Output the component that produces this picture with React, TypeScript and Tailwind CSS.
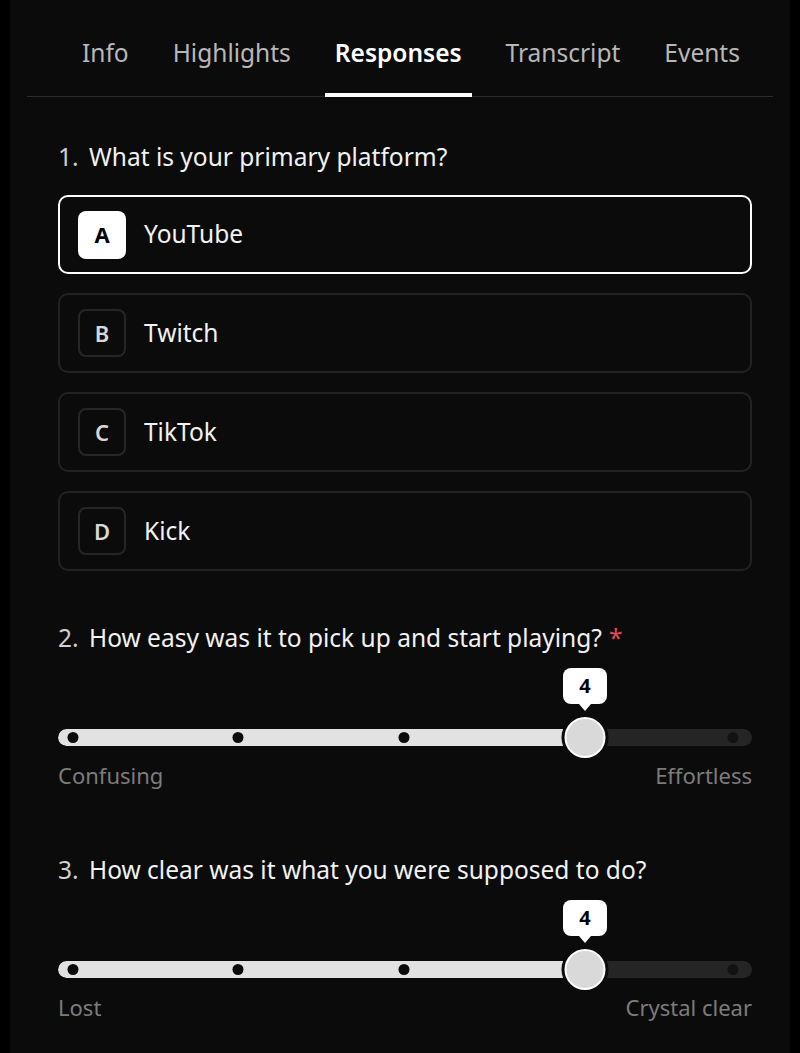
import { useState } from "react";

// ---------------------------------------------------------------------------
// Data
// ---------------------------------------------------------------------------

const TABS = ["Info", "Highlights", "Responses", "Transcript", "Events"];

const OPTIONS = [
  { key: "A", label: "YouTube" },
  { key: "B", label: "Twitch" },
  { key: "C", label: "TikTok" },
  { key: "D", label: "Kick" },
];

// dot offsets along the track (px from track start)
const DOTS = [15, 180, 346, 512, 675];
const THUMB_X = 527;

// ---------------------------------------------------------------------------
// Pieces
// ---------------------------------------------------------------------------

function Question({ n, text, required }: { n: number; text: string; required?: boolean }) {
  return (
    <div className="flex items-center h-[32px] text-[24.5px] leading-[32px]">
      <span className="text-[#d0d0d0] w-[31px]">{n}.</span>
      <span className="text-[#f2f2f2]">{text}</span>
      {required && <span className="text-[#e5484d] ml-[7px]">*</span>}
    </div>
  );
}

function RatingSlider({ value, low, high }: { value: number; low: string; high: string }) {
  return (
    <div>
      <div className="relative h-[84px]">
        {/* value bubble */}
        <div
          className="absolute top-0 -translate-x-1/2 flex flex-col items-center"
          style={{ left: THUMB_X }}
        >
          <div className="w-[44px] h-[36px] rounded-[8px] bg-white flex items-center justify-center text-black font-bold text-[20px]">
            {value}
          </div>
          <div className="w-0 h-0 border-l-[6px] border-r-[6px] border-t-[7px] border-l-transparent border-r-transparent border-t-white" />
        </div>

        {/* track */}
        <div className="absolute left-0 right-0 top-[61px] h-[17px] rounded-full bg-[#252525] overflow-hidden">
          <div className="h-full bg-[#e2e2e2] rounded-l-full" style={{ width: THUMB_X }} />
        </div>

        {/* step dots */}
        {DOTS.map((x, i) => (
          <div
            key={i}
            className={
              x < THUMB_X
                ? "absolute top-[64px] w-[11px] h-[11px] rounded-full bg-[#0b0b0b] -translate-x-1/2"
                : "absolute top-[64px] w-[11px] h-[11px] rounded-full bg-[#121212] -translate-x-1/2"
            }
            style={{ left: x }}
          />
        ))}

        {/* thumb */}
        <div
          className="absolute top-[49px] w-[41px] h-[41px] -translate-x-1/2 rounded-full bg-[#d9d9d9] border-2 border-white shadow-[0_0_0_3px_#0b0b0b]"
          style={{ left: THUMB_X }}
        />
      </div>
      <div className="mt-[9px] flex justify-between text-[22px] leading-[28px] text-[#7c7c7c]">
        <span>{low}</span>
        <span>{high}</span>
      </div>
    </div>
  );
}

// ---------------------------------------------------------------------------
// Page
// ---------------------------------------------------------------------------

export default function App() {
  const [tab, setTab] = useState("Responses");
  const [choice, setChoice] = useState("A");

  return (
    <div
      className="w-full h-[1053px] bg-black px-[10px] overflow-hidden"
      style={{ fontFamily: '"Noto Sans", "Open Sans", sans-serif' }}
    >
      <div className="h-full bg-[#0b0b0b]">
        {/* Tabs */}
        <div className="mx-[17px] pt-[37px] pl-[45px] flex gap-[24px] border-b border-[#2c2c2c]">
          {TABS.map((t) => (
            <button
              key={t}
              onClick={() => setTab(t)}
              className={
                t === tab
                  ? "relative px-[10px] pb-[27px] text-[24.5px] leading-[32px] font-semibold text-white"
                  : "relative px-[10px] pb-[27px] text-[24.5px] leading-[32px] text-[#b8b8b8]"
              }
            >
              {t}
              {t === tab && (
                <span className="absolute left-0 right-0 bottom-[-1px] h-[4px] bg-white" />
              )}
            </button>
          ))}
        </div>

        <div className="pl-[48px] pr-[38px] pt-[44px]">
          <Question n={1} text="What is your primary platform?" />

          <div className="mt-[22px] flex flex-col gap-[19px]">
            {OPTIONS.map((o) => {
              const on = o.key === choice;
              return (
                <button
                  key={o.key}
                  onClick={() => setChoice(o.key)}
                  className={
                    on
                      ? "h-[79px] rounded-[10px] border-2 border-white flex items-center pl-[18px] text-left"
                      : "h-[80px] rounded-[10px] border-2 border-[#222222] flex items-center pl-[18px] text-left"
                  }
                >
                  <span
                    className={
                      on
                        ? "w-[48px] h-[48px] rounded-[8px] bg-white text-black font-bold text-[22px] flex items-center justify-center"
                        : "w-[48px] h-[48px] rounded-[8px] border-2 border-[#262626] text-[#d8d8d8] font-semibold text-[22px] flex items-center justify-center"
                    }
                  >
                    {o.key}
                  </span>
                  <span className="ml-[18px] text-[24.5px] text-[#f2f2f2]">{o.label}</span>
                </button>
              );
            })}
          </div>

          <div className="mt-[51px]">
            <Question n={2} text="How easy was it to pick up and start playing?" required />
          </div>
          <div className="mt-[14px]">
            <RatingSlider value={4} low="Confusing" high="Effortless" />
          </div>

          <div className="mt-[65px]">
            <Question n={3} text="How clear was it what you were supposed to do?" />
          </div>
          <div className="mt-[14px]">
            <RatingSlider value={4} low="Lost" high="Crystal clear" />
          </div>
        </div>
      </div>
    </div>
  );
}
